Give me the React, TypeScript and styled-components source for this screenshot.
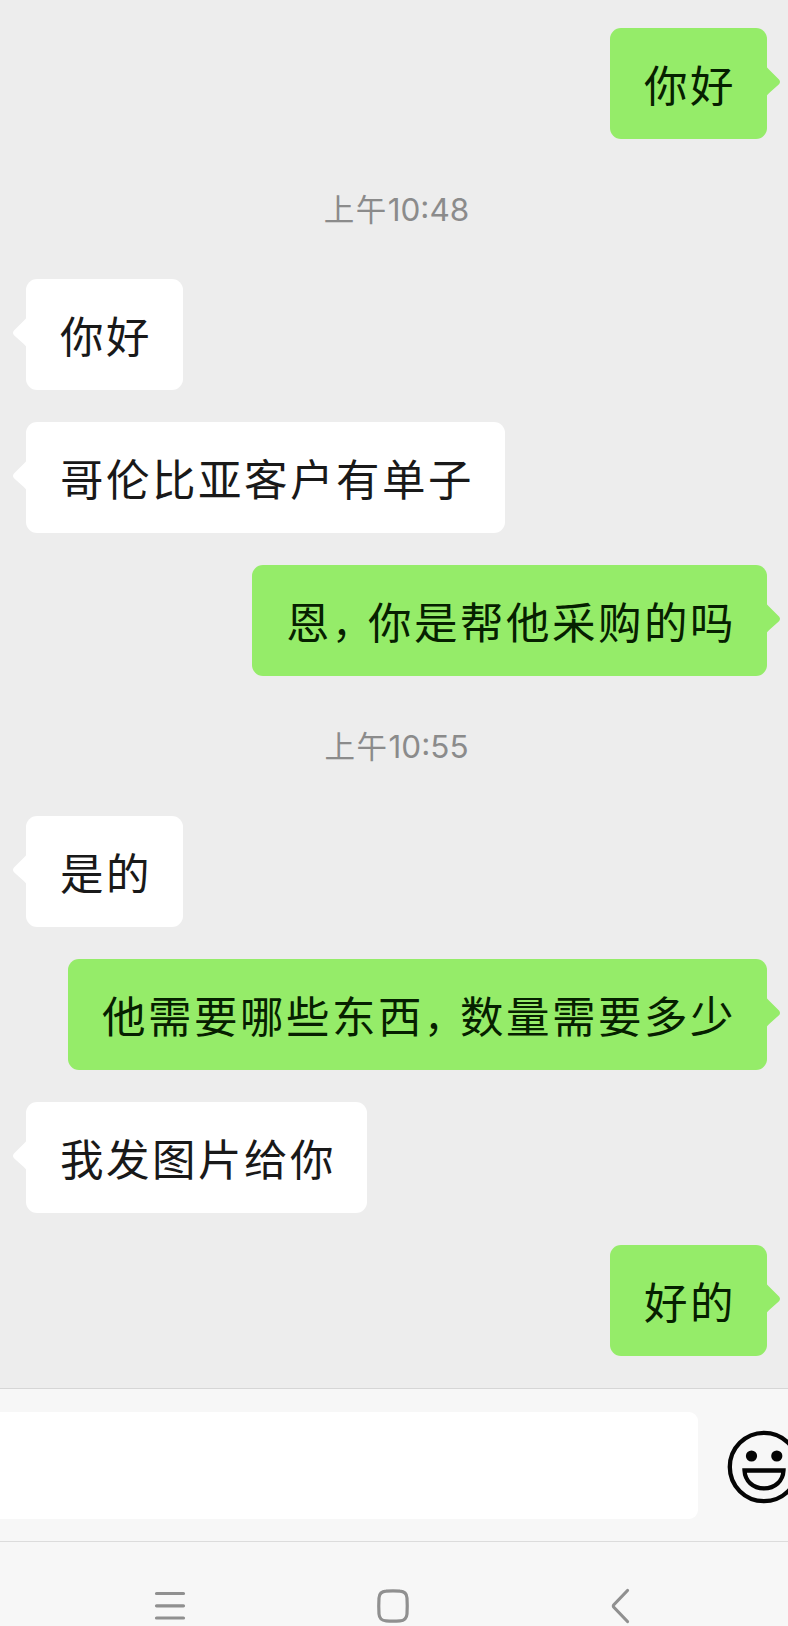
import React from 'react';
import styled, { createGlobalStyle } from 'styled-components';

const GlobalStyle = createGlobalStyle`
  html, body { margin: 0; padding: 0; background: #ededed; }
  body { overflow: hidden; }
  * { box-sizing: border-box; }
`;

const Screen = styled.div`
  width: 788px;
  height: 1626px;
  overflow: hidden;
  display: flex;
  flex-direction: column;
  background: #ededed;
  font-family: 'Noto Sans CJK SC', sans-serif;
`;

const Messages = styled.main`
  flex: none;
  height: 1388px;
  padding: 28px 21px 0 26px;
  display: flex;
  flex-direction: column;
  gap: 32px;
`;

const Bubble = styled.div<{ $mine?: boolean }>`
  position: relative;
  flex: none;
  align-self: ${(p) => (p.$mine ? 'flex-end' : 'flex-start')};
  height: 111px;
  padding: 1px 31px 0 34px;
  display: flex;
  align-items: center;
  border-radius: 11px;
  background: ${(p) => (p.$mine ? '#95ec69' : '#ffffff')};
  color: ${(p) => (p.$mine ? '#062000' : '#191919')};
`;

const BubbleText = styled.span`
  display: flex;
  font-size: 43.5px;
  line-height: 64px;
  letter-spacing: 2.5px;
  white-space: nowrap;
`;

const Comma = styled.span`
  width: 36px;
  font-size: 40px;
  font-feature-settings: 'halt';
`;

const Tail = styled.svg<{ $mine?: boolean }>`
  position: absolute;
  top: 38px;
  ${(p) => (p.$mine ? 'right: -14px;' : 'left: -14px; transform: scaleX(-1);')}
  width: 15px;
  height: 32px;
  fill: ${(p) => (p.$mine ? '#95ec69' : '#ffffff')};
`;

const Timestamp = styled.div`
  flex: none;
  height: 76px;
  padding-bottom: 2px;
  display: flex;
  justify-content: center;
  align-items: center;
  font-size: 30.5px;
  line-height: 44px;
  letter-spacing: 1.5px;
  color: #8b8b8b;
`;

const Clock = styled.span`
  padding-top: 3px;
  font-family: Inter, sans-serif;
  font-size: 31.5px;
  letter-spacing: 0;
`;

const InputBar = styled.section`
  flex: none;
  height: 154px;
  display: flex;
  align-items: center;
  gap: 29px;
  border-top: 1px solid #d6d6d6;
  border-bottom: 1px solid #dcdcdc;
  background: #f7f7f7;
`;

const Field = styled.div`
  flex: none;
  width: 698px;
  height: 107px;
  border-radius: 0 9px 9px 0;
  background: #ffffff;
`;

const EmojiIcon = styled.svg`
  flex: none;
  width: 74px;
  height: 74px;
  margin-top: 3px;
  fill: none;
  stroke: #050505;
  stroke-width: 4.3;
`;

const NavBar = styled.nav`
  flex: 1;
  padding: 49px 0 0 153px;
  display: flex;
  background: #f7f7f7;
`;

const NavIcon = styled.svg<{ $before?: number }>`
  flex: none;
  height: 38px;
  margin: -4px 0 0 ${(p) => p.$before ?? 0}px;
  fill: none;
  stroke: #909090;
  stroke-width: 3.2;
  stroke-linecap: round;
  stroke-linejoin: round;
`;

type Item = { time: string } | { text: string; mine?: boolean };

const items: Item[] = [
  { text: '你好', mine: true },
  { time: '10:48' },
  { text: '你好' },
  { text: '哥伦比亚客户有单子' },
  { text: '恩，你是帮他采购的吗', mine: true },
  { time: '10:55' },
  { text: '是的' },
  { text: '他需要哪些东西，数量需要多少', mine: true },
  { text: '我发图片给你' },
  { text: '好的', mine: true },
];

function Message({ text, mine }: { text: string; mine?: boolean }) {
  const [head, rest] = text.split('，');
  return (
    <Bubble $mine={mine}>
      <BubbleText>
        <span>{head}</span>
        {rest && <Comma>，</Comma>}
        {rest && <span>{rest}</span>}
      </BubbleText>
      <Tail $mine={mine} viewBox="0 0 15 32">
        <path d="M0 0C1 1.5 2 2.8 3.2 3.8L13 13.6Q15 16 13 18.2L3.2 27C2 28 1 29.5 0 31Z" />
      </Tail>
    </Bubble>
  );
}

export default function App() {
  return (
    <Screen>
      <GlobalStyle />
      <Messages>
        {items.map((item, i) =>
          'time' in item ? (
            <Timestamp key={i}>
              上午<Clock>{item.time}</Clock>
            </Timestamp>
          ) : (
            <Message key={i} text={item.text} mine={item.mine} />
          ),
        )}
      </Messages>
      <InputBar>
        <Field />
        <EmojiIcon viewBox="0 0 74 74">
          <circle cx="37" cy="37" r="34.2" />
          <circle cx="24.5" cy="26" r="5.6" fill="#050505" stroke="none" />
          <circle cx="49.8" cy="26" r="5.6" fill="#050505" stroke="none" />
          <path d="M17.500 40.500H56.500C56 51 48 58.300 37 58.300S18 51 17.500 40.500Z" />
        </EmojiIcon>
      </InputBar>
      <NavBar>
        <NavIcon width="34" viewBox="0 0 34 38">
          <path d="M3.500 6.500H30.500M3.500 18.800H30.500M3.500 31H30.500" />
        </NavIcon>
        <NavIcon $before={189} width="34" viewBox="0 0 34 38">
          <path d="M10 4.200Q17 3.600 24 4.200Q30.500 4.500 31 11Q31.500 19 31 27Q30.500 33.500 24 33.800Q17 34.400 10 33.800Q3.500 33.500 3 27Q2.500 19 3 11Q3.500 4.500 10 4.200Z" />
        </NavIcon>
        <NavIcon $before={200} width="20" viewBox="0 0 20 38">
          <path d="M17.500 3.500L3.600 18Q3 19 3.600 20L17.500 34.500" />
        </NavIcon>
      </NavBar>
    </Screen>
  );
}
